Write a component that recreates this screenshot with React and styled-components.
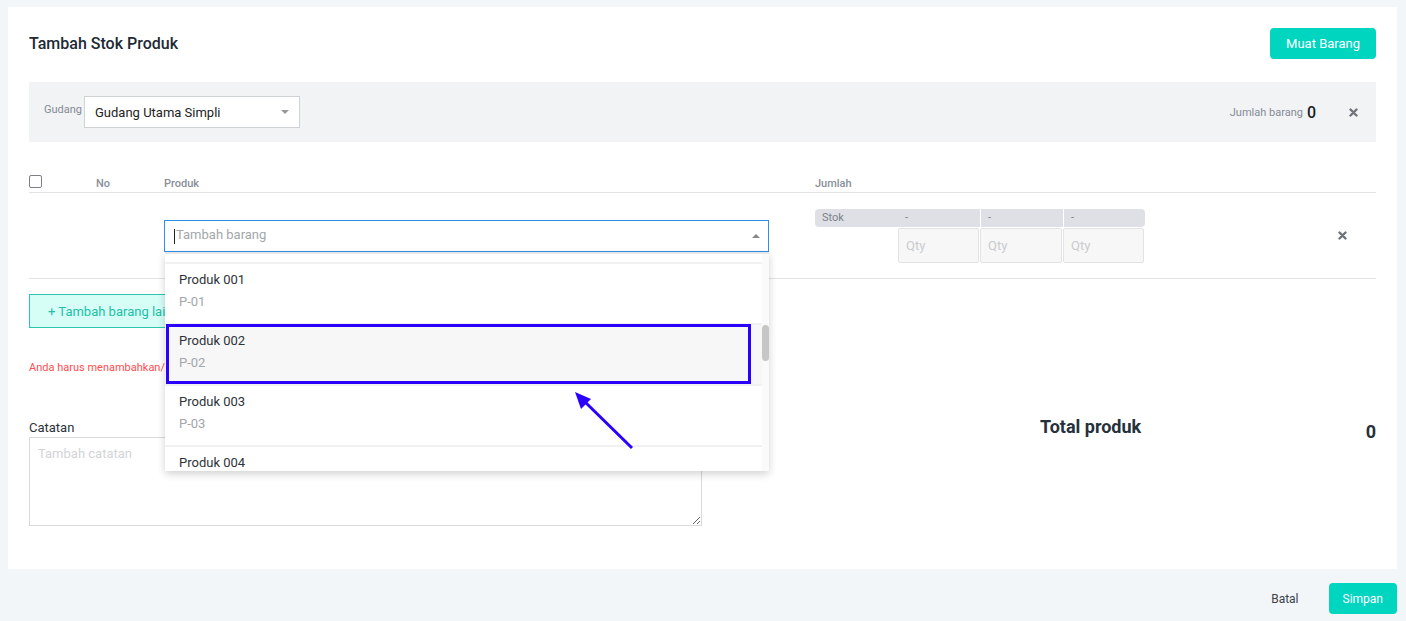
import React from 'react';
import styled, { createGlobalStyle } from 'styled-components';

const Global = createGlobalStyle`
    body {
        margin: 0;
        background: #f3f6f9;
        font-family: Roboto, 'Liberation Sans', sans-serif;
        color: #2b3440;
    }
`;

const Page = styled.div`
    padding: 7px 9px 0 8px;
    width: 1406px;
    height: 621px;
    box-sizing: border-box;
`;

const Card = styled.main`
    background: #fff;
    padding: 21px 21px 0;
    height: 562px;
    box-sizing: border-box;
`;

const Header = styled.div`
    display: flex;
    justify-content: space-between;
    align-items: center;
    height: 31px;
`;

const Title = styled.h1`
    margin: 0;
    font-size: 16px;
    font-weight: 500;
    color: #1d2a35;
`;

const TealButton = styled.button`
    border: none;
    border-radius: 4px;
    background: #00d5c0;
    color: #fff;
    font-family: inherit;
    font-size: ${p => p.small ? '12px' : '13px'};
    height: 31px;
    padding: 0 ${p => p.small ? '14px' : '16px'};
`;

const FilterBar = styled.div`
    margin-top: 23px;
    height: 60px;
    background: #f2f3f5;
    display: flex;
    align-items: center;
    padding: 0 18px 0 15px;
`;

const SmallLabel = styled.span`
    font-size: 11px;
    color: #858b95;
    margin-right: ${p => p.gap ?? 4}px;
    align-self: ${p => p.top ? 'flex-start' : 'auto'};
    margin-top: ${p => p.top ? '21px' : 0};
`;

const Select = styled.div`
    width: 216px;
    height: 32px;
    box-sizing: border-box;
    border: 1px solid #cfd2d6;
    background: #fff;
    display: flex;
    align-items: center;
    justify-content: space-between;
    padding: 0 10px;
    font-size: 13px;
    color: #222;
`;

const Caret = styled.span`
    width: 0;
    height: 0;
    border-left: 4px solid transparent;
    border-right: 4px solid transparent;
    ${p => p.up ? 'border-bottom: 4px solid #888;' : 'border-top: 4px solid #999;'}
    margin-right: ${p => p.up ? '-2px' : '0'};
`;

const Spacer = styled.div`flex: 1;`;

const Count = styled.span`
    font-size: 16px;
    font-weight: 500;
    color: #1b1f24;
`;

const CloseIcon = () => (
    <svg width="9" height="9" viewBox="0 0 9 9">
        <path d="M1.5 1.5 L7.5 7.5 M7.5 1.5 L1.5 7.5" stroke="#6f737a" strokeWidth="2.4" strokeLinecap="round" />
    </svg>
);

const CloseWrap = styled.span`
    display: flex;
    margin-left: ${p => p.ml || 0}px;
`;

const Grid = styled.div`
    display: grid;
    grid-template-columns: 67px 68px 651px 330px 1fr;
    align-items: center;
    border-bottom: 1px solid #e1e2e6;
`;

const HeadRow = styled(Grid)`
    margin-top: 33px;
    height: 17px;
    align-items: start;
`;

const HeadCell = styled.span`
    font-size: 11px;
    font-weight: 500;
    color: #8a8f98;
    padding-top: 2px;
`;

const Checkbox = styled.span`
    width: 11px;
    height: 11px;
    border: 1px solid #7d8087;
    border-radius: 2px;
    background: #fff;
`;

const BodyRow = styled(Grid)`
    height: 85px;
`;

const ProductCell = styled.div`
    position: relative;
    width: 605px;
`;

const Combo = styled.div`
    height: 32px;
    box-sizing: border-box;
    border: 1px solid #2d8fe8;
    display: flex;
    align-items: center;
    justify-content: space-between;
    padding: 0 10px 0 9px;
    font-size: 13px;
    color: #a4a7ab;
`;

const Cursor = styled.span`
    display: inline-block;
    width: 1px;
    height: 15px;
    background: #222;
    vertical-align: middle;
    margin-right: 1px;
`;

const Dropdown = styled.div`
    position: absolute;
    top: 100%;
    left: 1px;
    right: 0;
    height: 219px;
    background: #fff;
    box-shadow: 0 3px 8px rgba(0, 0, 0, 0.18);
    display: flex;
    z-index: 5;
    border-top: 2px solid #e7e7e7;
    box-sizing: border-box;
`;

const List = styled.div`
    flex: 1;
    overflow: hidden;
    padding-top: 8px;
`;

const Option = styled.div`
    position: relative;
    border-top: 2px solid #f1f1f1;
    height: 61px;
    box-sizing: border-box;
    padding: 5px 14px 0;
    background: ${p => p.active ? '#f7f7f7' : '#fff'};

    ${p => p.active && `
        &::after {
            content: '';
            position: absolute;
            left: 1px;
            right: 11px;
            top: -1px;
            bottom: 0;
            border: 3px solid #2a00ff;
        }
    `}
`;

const OptName = styled.div`
    font-size: 13px;
    line-height: 22px;
    color: #2d3339;
`;

const OptCode = styled.div`
    font-size: 13px;
    line-height: 22px;
    color: #a2a6ac;
`;

const Track = styled.div`
    width: 7px;
    background: #fafafa;
    padding-top: 71px;
`;

const Thumb = styled.div`
    height: 36px;
    border-radius: 4px;
    background: #c6c6c6;
`;

const Arrow = styled.svg`
    position: absolute;
    left: 0;
    top: 0;
    pointer-events: none;
`;

const QtyGrid = styled.div`
    display: grid;
    grid-template-columns: 83px 82px 83px 82px;
    row-gap: 1px;
`;

const StokCell = styled.div`
    background: #dfe0e5;
    height: 18px;
    font-size: 11px;
    color: #7b818a;
    line-height: 18px;
    padding-left: 7px;
    border-left: ${p => p.divide ? '1px solid #fff' : 'none'};
    border-radius: ${p => p.first ? '4px 0 0 4px' : p.last ? '0 4px 4px 0' : '0'};
`;

const QtyInput = styled.div`
    height: 35px;
    box-sizing: border-box;
    border: 1px solid #e3e3e3;
    border-radius: 2px;
    background: #f7f7f7;
    font-size: 13px;
    color: #c9cbce;
    line-height: 33px;
    padding-left: 7px;
    margin-right: 1px;
`;

const Empty = styled.div``;

const RowClose = styled.div`
    display: flex;
    justify-content: flex-end;
    padding-right: 29px;
`;

const AddButton = styled.button`
    margin-top: 15px;
    height: 34px;
    width: 200px;
    border: 1px solid #2cc5ae;
    background: #d6fdf6;
    color: #22bfa8;
    font-family: inherit;
    font-size: 13px;
    text-align: left;
    padding-left: 18px;
    display: block;
`;

const ErrorText = styled.p`
    margin: 33px 0 0;
    font-size: 11px;
    color: #ff4d4f;
`;

const Bottom = styled.div`
    margin-top: 46px;
    display: grid;
    grid-template-columns: 673px 1fr 336px;
`;

const NoteLabel = styled.div`
    font-size: 13px;
    color: #2b3137;
    line-height: 16px;
`;

const NoteArea = styled.textarea`
    display: block;
    margin-top: 1px;
    width: 673px;
    height: 89px;
    box-sizing: border-box;
    border: 1px solid #d9d9d9;
    padding: 8px;
    font-family: inherit;
    font-size: 13px;
    resize: vertical;
    &::placeholder { color: #d2d4d6; }
`;

const TotalBox = styled.div`
    display: flex;
    justify-content: space-between;
    align-items: flex-start;
    margin-top: -4px;
    font-size: 18px;
    font-weight: 700;
    color: #25313b;
`;

const TotalValue = styled.span`
    margin-top: 5px;
`;

const Footer = styled.div`
    display: flex;
    justify-content: flex-end;
    align-items: center;
    gap: 30px;
    padding-top: 14px;
`;

const LinkText = styled.span`
    font-size: 12px;
    color: #39424b;
`;

const products = [
    ['Produk 001', 'P-01'],
    ['Produk 002', 'P-02'],
    ['Produk 003', 'P-03'],
    ['Produk 004', 'P-04'],
];

export default function App() {
    return (
        <Page>
            <Global />
            <Card>
                <Header>
                    <Title>Tambah Stok Produk</Title>
                    <TealButton>Muat Barang</TealButton>
                </Header>

                <FilterBar>
                    <SmallLabel top gap={2}>Gudang</SmallLabel>
                    <Select>
                        Gudang Utama Simpli
                        <Caret />
                    </Select>
                    <Spacer />
                    <SmallLabel gap={4}>Jumlah barang</SmallLabel>
                    <Count>0</Count>
                    <CloseWrap ml={33}><CloseIcon /></CloseWrap>
                </FilterBar>

                <HeadRow>
                    <Checkbox />
                    <HeadCell>No</HeadCell>
                    <HeadCell>Produk</HeadCell>
                    <HeadCell>Jumlah</HeadCell>
                    <span />
                </HeadRow>

                <BodyRow>
                    <span />
                    <span />
                    <ProductCell>
                        <Combo>
                            <span><Cursor />Tambah barang</span>
                            <Caret up />
                        </Combo>
                        <Dropdown>
                            <List>
                                {products.map(([name, code], i) => (
                                    <Option key={code} active={i === 1}>
                                        <OptName>{name}</OptName>
                                        <OptCode>{code}</OptCode>
                                    </Option>
                                ))}
                            </List>
                            <Track><Thumb /></Track>
                            <Arrow width="604" height="219" viewBox="0 0 604 219">
                                <line x1="467" y1="194" x2="417" y2="145" stroke="#2a00ff" strokeWidth="3" />
                                <polygon points="410,138 426,145 416,155" fill="#2a00ff" />
                            </Arrow>
                        </Dropdown>
                    </ProductCell>
                    <QtyGrid>
                        <StokCell first>Stok</StokCell>
                        <StokCell>-</StokCell>
                        <StokCell divide>-</StokCell>
                        <StokCell divide last>-</StokCell>
                        <Empty />
                        <QtyInput>Qty</QtyInput>
                        <QtyInput>Qty</QtyInput>
                        <QtyInput>Qty</QtyInput>
                    </QtyGrid>
                    <RowClose><CloseIcon /></RowClose>
                </BodyRow>

                <AddButton>+ Tambah barang lain</AddButton>
                <ErrorText>Anda harus menambahkan/memilih minimal satu barang</ErrorText>

                <Bottom>
                    <div>
                        <NoteLabel>Catatan</NoteLabel>
                        <NoteArea placeholder="Tambah catatan" />
                    </div>
                    <span />
                    <TotalBox>
                        <span>Total produk</span>
                        <TotalValue>0</TotalValue>
                    </TotalBox>
                </Bottom>
            </Card>
            <Footer>
                <LinkText>Batal</LinkText>
                <TealButton small>Simpan</TealButton>
            </Footer>
        </Page>
    );
}
